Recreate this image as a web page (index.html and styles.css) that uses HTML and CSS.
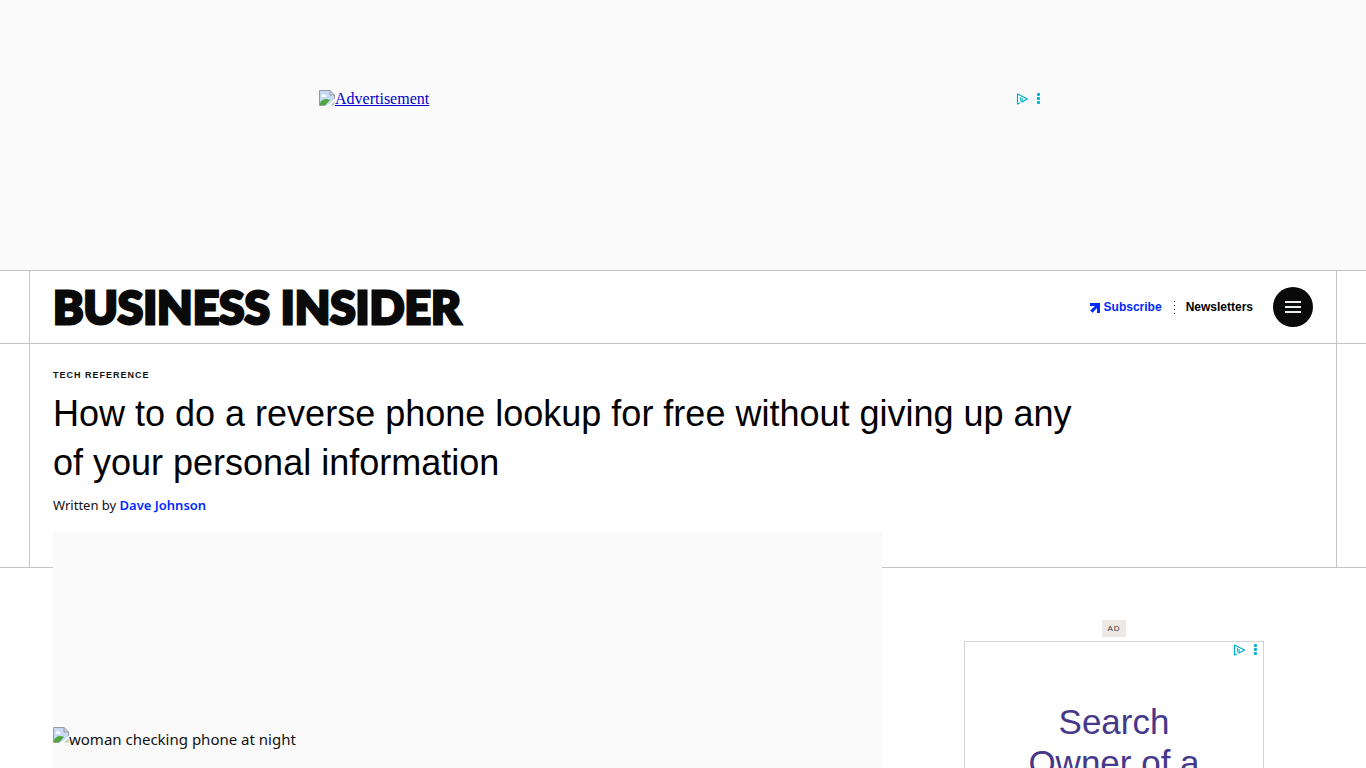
FILE: index.html
```html
<!DOCTYPE html>
<html lang="en">
<head>
    <meta charset="UTF-8">
    <meta name="viewport" content="width=device-width, initial-scale=1.0">
    <title>How to do a reverse phone lookup for free</title>
    <link rel="stylesheet" href="styles.css">
</head>
<body>
    <!-- shared icons -->
    <svg class="sprite" aria-hidden="true">
        <symbol id="broken" viewBox="0 0 16 16">
            <path d="M.5 .5H11L15.500 5V10L9 15.500H.5Z" fill="#c6d9f5"/>
            <path d="M1 13C3 9 7 8 11 10L6 15.500H1Z" fill="#4fa83d"/>
            <path d="M3 5.500c0-2 3-2 3-.5 2-.5 2 2 .5 2h-3c-1.500 0-1.500-1.500-.5-1.500z" fill="#fff"/>
            <path d="M.5 15.500V.5H11L15.500 5V9M.5 15.500H6M11 .5V5H15.500" fill="none" stroke="#9a9a9a"/>
            <path d="M16 8.500L7.500 16H10L16 11Z" fill="#fff"/>
            <path d="M11 15.500H15.500V11.500Z" fill="#b9cdb5"/>
        </symbol>
        <symbol id="adchoices" viewBox="0 0 25 12">
            <path d="M4 10L1.500 11V1L11.500 6L6 9V5" fill="none" stroke="#00aecd" stroke-width="1.200" stroke-linejoin="round"/>
            <path d="M4.500 4V8.500" stroke="#00aecd" stroke-width=".8"/>
            <rect x="21" y="0" width="3" height="3" rx="1" fill="#00aecd"/>
            <rect x="21" y="4" width="3" height="3" rx="1" fill="#00aecd"/>
            <rect x="21" y="8" width="3" height="3" rx="1" fill="#00aecd"/>
        </symbol>
    </svg>

    <div class="topad">
        <div class="banner">
            <a href="#"><svg class="broken"><use href="#broken"/></svg>Advertisement</a>
            <svg class="choices"><use href="#adchoices"/></svg>
        </div>
    </div>

    <header class="masthead">
        <div class="inner bar">
            <a class="logo" href="#">BUSINESS INSIDER</a>
            <nav class="links">
                <a class="subscribe" href="#">
                    <svg viewBox="0 0 10 10" width="10" height="10"><path d="M0 0H10V10H7V5L2.500 9.800L.2 7.500L5 3H0Z" fill="#002aff"/></svg>
                    Subscribe
                </a>
                <span class="divider"></span>
                <a class="news" href="#">Newsletters</a>
                <button class="menu" type="button" aria-label="Menu">
                    <svg viewBox="0 0 16 12" width="16" height="12"><path d="M0 1H16M0 6H16M0 11H16" stroke="#e8eeec" stroke-width="2"/></svg>
                </button>
            </nav>
        </div>
    </header>

    <section class="posthead">
        <div class="inner title">
            <a class="tag" href="#">TECH REFERENCE</a>
            <h1>How to do a reverse phone lookup for free without giving up any of your personal information</h1>
            <p class="byline">Written by <a href="#">Dave Johnson</a></p>
        </div>
    </section>

    <main class="content">
        <div class="hero">
            <svg class="broken"><use href="#broken"/></svg>woman checking phone at night
        </div>
        <aside class="side">
            <span class="adlabel">AD</span>
            <div class="adbox">
                <svg class="choices"><use href="#adchoices"/></svg>
                <a href="#">Search Owner of a</a>
            </div>
        </aside>
    </main>
</body>
</html>
```
FILE: styles.css
```css
body{
    margin: 0;
    height: 100vh;
    overflow: hidden;
    background-color: #fff;
    color: #111;
    font-family: "Noto Sans", "Open Sans", sans-serif;
}
a{
    text-decoration: none;
}
.sprite{
    display: none;
}
.broken{
    width: 16px;
    height: 16px;
}
.choices{
    width: 25px;
    height: 12px;
}

.topad{
    height: 180px;
    padding-top: 90px;
    background-color: #fafafa;
}
.banner{
    display: flex;
    justify-content: space-between;
    max-width: 728px;
    margin: 0 auto;
    font-family: "Liberation Serif", serif;
    font-size: 16px;
    line-height: 18px;
}
.banner a{
    display: flex;
    color: #0000cc;
    text-decoration: underline;
}
.banner .choices{
    margin: 3px 6px 0 0;
}

.masthead, .posthead{
    border-bottom: 1px solid #c4c4c4;
}
.masthead{
    border-top: 1px solid #c4c4c4;
}
.inner{
    margin: 0 29px;
    padding: 0 23px;
    border-left: 1px solid #c4c4c4;
    border-right: 1px solid #c4c4c4;
}
.bar{
    display: flex;
    align-items: center;
    justify-content: space-between;
    height: 72px;
}
.logo{
    color: #0a0a0a;
    font-family: Lato, sans-serif;
    font-size: 46px;
    font-weight: 900;
    line-height: 72px;
    -webkit-text-stroke: 3px #0a0a0a;
}
.links{
    display: flex;
    align-items: center;
    font-family: "Liberation Sans", Arial, sans-serif;
    font-size: 12px;
    font-weight: 700;
    line-height: 16px;
}
.subscribe{
    display: flex;
    align-items: center;
    gap: 4px;
    color: #002aff;
}
.subscribe svg{
    margin-top: 2px;
}
.divider{
    width: 1px;
    height: 13px;
    margin: 0 11px 0 12px;
    background: repeating-linear-gradient(#111 0 1px, transparent 1px 4px);
}
.news{
    color: #000;
}
.menu{
    display: flex;
    align-items: center;
    justify-content: center;
    width: 40px;
    height: 40px;
    margin-left: 20px;
    padding: 0;
    border: 0;
    border-radius: 50%;
    background-color: #0a0a0a;
}

.title{
    height: 199px;
    padding-top: 24px;
}
.tag{
    display: block;
    color: #111;
    font-family: "Liberation Sans", Arial, sans-serif;
    font-size: 9px;
    font-weight: 700;
    line-height: 14px;
    letter-spacing: 1px;
}
h1{
    max-width: 1040px;
    margin: 7px 0 0;
    color: #000;
    font-family: "Liberation Sans", Arial, sans-serif;
    font-size: 36px;
    font-weight: 400;
    line-height: 49px;
}
.byline{
    margin: 8px 0 0;
    font-size: 13px;
    line-height: 20px;
}
.byline a{
    color: #002aff;
    font-weight: 600;
}

.content{
    display: grid;
    grid-template-columns: 1fr 398px;
    gap: 33px;
    padding: 0 53px;
}
.hero{
    position: relative;
    display: flex;
    height: 220px;
    margin-top: -36px;
    padding-top: 195px;
    background-color: #fafafa;
    font-size: 15px;
    line-height: 24px;
}
.side{
    display: flex;
    flex-direction: column;
    align-items: center;
    padding-top: 52px;
    font-family: "Liberation Sans", Arial, sans-serif;
}
.adlabel{
    padding: 0 5px;
    background-color: #ede8e4;
    color: #333;
    font-size: 8px;
    line-height: 17px;
    letter-spacing: 1px;
}
.adbox{
    box-sizing: border-box;
    width: 300px;
    height: 250px;
    margin-top: 4px;
    border: 1px solid #d4d4d4;
    text-align: center;
}
.adbox .choices{
    display: block;
    margin: 2px 5px 0 auto;
}
.adbox a{
    display: block;
    margin: 45px 60px 0;
    color: #46398c;
    font-size: 35px;
    line-height: 41px;
}
```
